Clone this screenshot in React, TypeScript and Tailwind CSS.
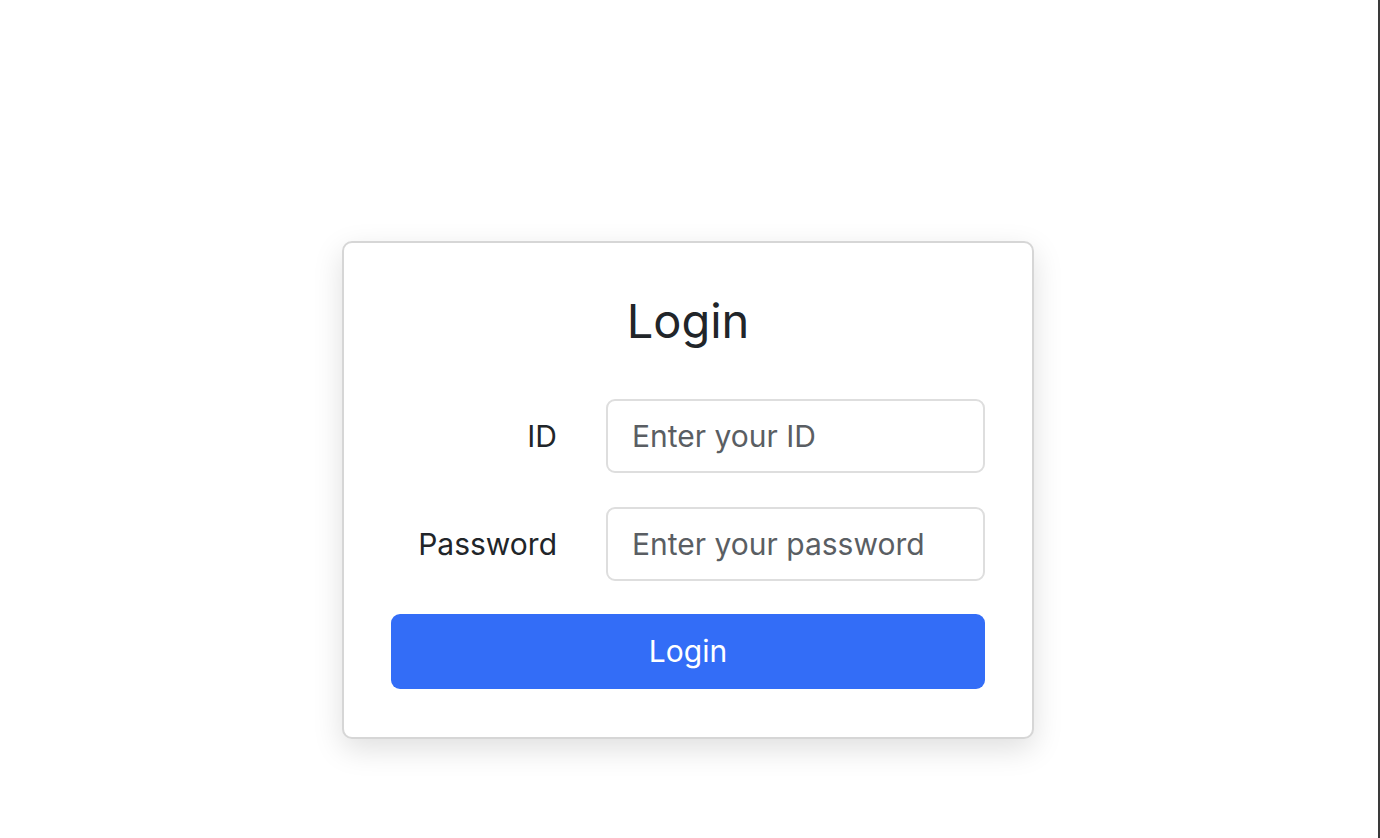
export default function App() {
  return (
    <div
      className="flex h-[838px] w-full justify-center border-r-2 border-[#3a3a3a] bg-white pt-[241px]"
      style={{ fontFamily: 'Inter, "Noto Sans", sans-serif' }}
    >
      <div className="mr-[2px] h-[498px] w-[692px] rounded-[10px] border-2 border-[#d6d6d6] bg-white px-[47px] pt-[45px] shadow-[0_10px_30px_rgba(0,0,0,0.13)]">
        <h1 className="text-center text-[47px] font-normal leading-[66px] text-[#212529]">Login</h1>

        <form className="mt-[45px] flex flex-col" onSubmit={(e) => e.preventDefault()}>
          <div className="flex items-center">
            <label className="w-[166px] text-right text-[30px] text-[#212529]">ID</label>
            <input
              className="ml-[49px] h-[74px] w-[379px] rounded-[9px] border-2 border-[#dedede] px-[24px] text-[30px] text-[#212529] outline-none placeholder:text-[#5a5e63]"
              placeholder="Enter your ID"
            />
          </div>
          <div className="mt-[34px] flex items-center">
            <label className="w-[166px] text-right text-[30px] text-[#212529]">Password</label>
            <input
              type="password"
              className="ml-[49px] h-[74px] w-[379px] rounded-[9px] border-2 border-[#dedede] px-[24px] text-[30px] text-[#212529] outline-none placeholder:text-[#5a5e63]"
              placeholder="Enter your password"
            />
          </div>
          <button
            type="submit"
            className="mt-[33px] h-[75px] w-[594px] rounded-[9px] bg-[#336df7] text-[30px] text-white"
          >
            Login
          </button>
        </form>
      </div>
    </div>
  );
}
